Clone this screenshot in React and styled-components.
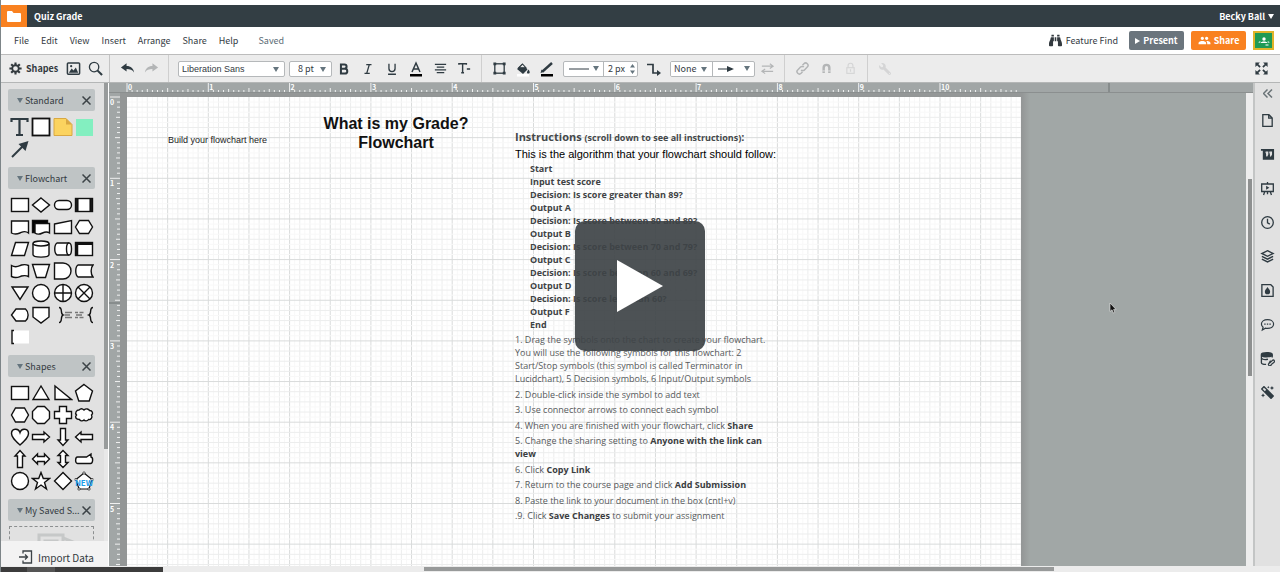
import React from "react";
import styled, { createGlobalStyle } from "styled-components";
import { FaBinoculars, FaMagic, FaWrench } from "react-icons/fa";
import { MdPeople } from "react-icons/md";

const INCH = 81.3;
const INK = "#2f3b42";

const GlobalStyle = createGlobalStyle`
  * {
    box-sizing: border-box;
  }
  body {
    margin: 0;
    overflow: hidden;
    font-family: "Noto Sans CJK SC", "Noto Sans", sans-serif;
    font-size: 9px;
    color: #333a3f;
  }
  button, select, input {
    font: inherit;
    color: inherit;
  }
  h1, h2, p, ul, ol {
    margin: 0;
    padding: 0;
    list-style: none;
  }
`;

const Shell = styled.div`
  display: flex;
  flex-direction: column;
  height: 100vh;
  border-left: 1px solid #7d8588;
  padding-top: 5px;
  background: #fff;
`;

const TitleBar = styled.header`
  display: flex;
  align-items: center;
  height: 22px;
  flex: none;
  padding-right: 6px;
  background: #333e44;
  color: #fff;
`;

const HomeLink = styled.a`
  display: flex;
  align-items: center;
  justify-content: center;
  width: 26px;
  height: 22px;
  background: #f98120;
  color: #fff;
`;

const DocTitle = styled.h1`
  flex: 1;
  padding-left: 7px;
  font-size: 9px;
  font-weight: 700;
`;

const UserButton = styled.button`
  display: flex;
  align-items: center;
  gap: 3px;
  padding: 0;
  border: 0;
  background: none;
  font-weight: 700;
`;

const MenuBar = styled.nav`
  display: flex;
  align-items: center;
  height: 28px;
  flex: none;
  padding: 0 6px 0 13px;
  border-bottom: 1px solid #bcbcbc;
`;

const MenuButton = styled.button`
  padding: 0;
  margin-right: 12px;
  border: 0;
  background: none;
`;

const SaveState = styled.span`
  margin-left: 8px;
  color: #5b6b75;
`;

const MenuActions = styled.div`
  display: flex;
  align-items: center;
  gap: 7px;
  margin-left: auto;
`;

const FeatureFind = styled.button`
  display: flex;
  align-items: center;
  gap: 4px;
  padding: 0;
  margin-right: 4px;
  border: 0;
  background: none;
`;

const ActionButton = styled.button`
  display: flex;
  align-items: center;
  justify-content: center;
  gap: 3px;
  width: 55px;
  height: 19px;
  padding: 0;
  border: 0;
  border-radius: 2px;
  background: ${(p) => p.$color};
  color: #fff;
  font-weight: 700;
`;

const ClassroomButton = styled.button`
  display: flex;
  align-items: center;
  justify-content: center;
  width: 21px;
  height: 19px;
  padding: 0;
  border: 2px solid #dfb32a;
  background: #1f9a55;
`;

const ToolBar = styled.div`
  display: flex;
  align-items: center;
  height: 28px;
  flex: none;
  background: #ececec;
  border-bottom: 1px solid #b4b6b6;
`;

const ToolLead = styled.div`
  display: flex;
  align-items: center;
  gap: 6px;
  width: 109px;
  height: 27px;
  padding: 0 6px 0 8px;
  border-right: 1px solid #c4c4c4;
`;

const ShapesButton = styled.button`
  display: flex;
  align-items: center;
  flex: 1;
  gap: 4px;
  padding: 0;
  border: 0;
  background: none;
  font-weight: 700;
`;

const ToolGroup = styled.div`
  display: flex;
  align-items: center;
  height: 27px;
  padding: 0 5px;
  border-right: ${(p) => (p.$last ? "0" : "1px solid #cfcfcf")};
`;

const FieldRow = styled.div`
  display: flex;
  align-items: center;
  gap: 4px;
  padding-left: 4px;
`;

const IconButton = styled.button`
  display: flex;
  align-items: center;
  justify-content: center;
  width: ${(p) => p.$w || 24}px;
  height: 22px;
  padding: 0;
  border: 0;
  background: none;
  color: ${(p) => (p.$off ? "#b3b5b6" : INK)};
  opacity: ${(p) => (p.$faint ? 0.4 : 1)};
`;

const FullScreen = styled(IconButton)`
  margin: 0 7px 0 auto;
`;

const Field = styled.div`
  position: relative;
  width: ${(p) => p.$w}px;
  height: 16px;
  background: #fff;
  border: ${(p) => (p.$joined ? "0" : "1px solid #b5b8ba")};
  border-right: ${(p) => (p.$joined ? "1px solid #b5b8ba" : "")};
  border-radius: ${(p) => (p.$joined ? 0 : 2)}px;
`;

const Select = styled.select`
  appearance: none;
  display: block;
  width: 100%;
  height: 14px;
  padding: 0 0 0 ${(p) => p.$pad || 3}px;
  border: 0;
  background: transparent;
  font-family: ${(p) => (p.$sans ? '"Liberation Sans", sans-serif' : "inherit")};
  line-height: 14px;
`;

const FieldCaret = styled.span`
  position: absolute;
  right: 5px;
  top: 5px;
  pointer-events: none;
`;

const JoinedFields = styled.div`
  display: flex;
  height: 16px;
  border: 1px solid #b5b8ba;
  border-radius: 2px;
  background: #fff;
  overflow: hidden;
`;

const MenuField = styled.button`
  display: flex;
  align-items: center;
  justify-content: space-between;
  width: ${(p) => p.$w}px;
  padding: 0 4px 0 5px;
  border: 0;
  border-right: ${(p) => (p.$line ? "1px solid #b5b8ba" : "0")};
  background: none;
`;

const WidthInput = styled.input`
  width: 25px;
  padding: 0 0 0 4px;
  border: 0;
  background: none;
`;

const Caret = styled.span`
  display: block;
  width: 0;
  height: 0;
  border-left: 3px solid transparent;
  border-right: 3px solid transparent;
  border-top: 5px solid ${(p) => p.$color || "#65757e"};
`;

const Workspace = styled.div`
  display: flex;
  flex: 1;
  min-height: 0;
`;

const SidePanel = styled.aside`
  display: flex;
  flex-direction: column;
  width: 108px;
  flex: none;
  background: #e1e1e1;
  border-right: 1px solid #fff;
`;

const ShapeScroller = styled.div`
  display: flex;
  flex: 1;
  min-height: 0;
  overflow: hidden;
`;

const ShapeSections = styled.div`
  flex: 1;
  min-width: 0;
  padding: 6px 9px 0 7px;
`;

const PanelScrollbar = styled.div`
  width: 4px;
  background: #e8e8e8;
`;

const PanelThumb = styled.div`
  height: 80%;
  background: #989b9b;
`;

const SectionHeader = styled.h2`
  display: flex;
  align-items: center;
  height: 22px;
  gap: 2px;
  padding: 0 4px 0 9px;
  background: #bfc4c5;
  border-radius: 2px;
  font-size: 9px;
  font-weight: 400;
  white-space: nowrap;
`;

const SectionName = styled.span`
  flex: 1;
`;

const CloseButton = styled.button`
  display: flex;
  padding: 0;
  border: 0;
  background: none;
`;

const ShapeGrid = styled.div`
  display: grid;
  grid-template-columns: repeat(4, 1fr);
  grid-auto-rows: 22px;
  padding: 5px 0 7px 1px;
`;

const ShapeButton = styled.button`
  display: flex;
  align-items: center;
  justify-content: center;
  padding: 0;
  border: 0;
  background: none;
`;

const SavedDrop = styled.div`
  display: flex;
  justify-content: center;
  height: 60px;
  margin: 5px 1px;
  padding-top: 5px;
  border: 1px dashed #8c8f90;
`;

const ImportButton = styled.button`
  display: flex;
  align-items: center;
  gap: 5px;
  height: 25px;
  padding: 7px 0 0 18px;
  border: 0;
  background: #f3f3f3;
  font-size: 10px;
`;

const Stage = styled.main`
  display: grid;
  grid-template-columns: 11px 1fr;
  grid-template-rows: 10px 1fr;
  flex: 1;
  min-width: 0;
  background: #a1a6a6;
`;

const TopRuler = styled.div`
  grid-column: 1 / 3;
  height: 10px;
  overflow: hidden;
  border-bottom: 1px solid #8b8f8f;
`;

const SideRuler = styled.div`
  overflow: hidden;
  min-height: 0;
`;

const View = styled.div`
  display: flex;
  min-height: 0;
  min-width: 0;
`;

const Desk = styled.div`
  flex: 1;
  min-width: 0;
  overflow: hidden;
  padding: 4px 0 0 7px;
  background: linear-gradient(90deg, #949797 902px, #a1a7a6 910px);
`;

const Page = styled.div`
  position: relative;
  width: 894px;
  height: 100%;
  background: #fff;
`;

const GridSvg = styled.svg`
  display: block;
  width: 100%;
  height: 100%;
`;

// text boxes sit freely on the page
const CanvasText = styled.div`
  position: absolute;
  left: ${(p) => p.$x}px;
  top: ${(p) => p.$y}px;
  width: ${(p) => p.$w}px;
`;

const BuildText = styled(CanvasText)`
  font: 9px/12px "Liberation Sans", sans-serif;
  color: #222;
`;

const PageTitle = styled(CanvasText)`
  font: bold 16px/19px "Liberation Sans", sans-serif;
  text-align: center;
  color: #111;
`;

const Instructions = styled(CanvasText)`
  font-family: "Open Sans", sans-serif;
  font-size: 9px;
  line-height: 13px;
  color: #56595b;
  strong {
    color: #3a3d3f;
  }
`;

const InstructionsTitle = styled.h2`
  font-size: 11px;
  line-height: 16px;
  color: #44484a;
  small {
    font-size: 9px;
  }
`;

const Intro = styled.p`
  padding-top: 1px;
  font: 11px/15px "Liberation Sans", sans-serif;
  color: #000;
`;

const Algorithm = styled.ul`
  padding-left: 15px;
  font-weight: 700;
  color: #3f4345;
`;

const Steps = styled.ul`
  display: flex;
  flex-direction: column;
  justify-content: space-between;
  height: 189px;
  margin-top: 2px;
`;

const VScroll = styled.div`
  width: 7px;
  padding: 86px 1px 0 2px;
  background: #ededed;
`;

const VThumb = styled.div`
  height: 51%;
  background: #8e9090;
`;

const Dock = styled.aside`
  display: flex;
  flex-direction: column;
  align-items: center;
  width: 27px;
  flex: none;
  background: #e1e1e1;
  border-left: 2px solid #c3c5c5;
`;

const DockButton = styled.button`
  display: flex;
  align-items: center;
  justify-content: center;
  width: 25px;
  height: ${(p) => p.$h || 34}px;
  flex: none;
  padding: 0;
  border: 0;
  background: none;
  color: ${INK};
`;

const BottomBar = styled.footer`
  display: flex;
  height: 6px;
  flex: none;
  padding: 1px 27px 0 0;
  background: #ececec;
`;

const BottomDark = styled.div`
  width: 162px;
  background: linear-gradient(90deg, #3c3c3c 26px, #555 26px, #555 54px, #3c3c3c 54px);
`;

const BottomTrack = styled.div`
  flex: 1;
  padding-left: 261px;
`;

const BottomThumb = styled.div`
  width: 76%;
  height: 4px;
  background: #989a9a;
`;

const PlayButton = styled.button`
  position: fixed;
  inset: 0;
  margin: auto;
  display: flex;
  align-items: center;
  justify-content: center;
  width: 130px;
  height: 130px;
  padding: 0;
  border: 0;
  border-radius: 10px;
  background: rgba(62, 67, 70, 0.92);
`;

const Pointer = styled.svg`
  position: absolute;
  left: 1109px;
  top: 302px;
`;

function Icon({ size = 16, children, ...rest }) {
  return (
    <svg width={size} height={size} viewBox="0 0 16 16" fill="none" stroke="currentColor" strokeWidth="1.4" aria-hidden="true" {...rest}>
      {children}
    </svg>
  );
}

const solid = { fill: "currentColor", stroke: "none" };

const toolIcons = {
  gear: (
    <>
      <circle cx="8" cy="8" r="4" strokeWidth="2.2" />
      <path d="M8 .5v3.500M8 12v3.500M.5 8h3.500M12 8h3.500M2.700 2.700L5 5M11 11l2.300 2.300M13.300 2.700L11 5M5 11l-2.300 2.300" strokeWidth="2.6" />
    </>
  ),
  image: (
    <>
      <rect x="1.500" y="2" width="13" height="12" rx="1" strokeWidth="1.6" />
      <path d="M3 12.500l3-4.500 2 2 2.500-3 2.500 5.500z" {...solid} />
      <circle cx="5.500" cy="5.500" r="1.200" {...solid} />
    </>
  ),
  search: (
    <>
      <circle cx="6.500" cy="6.500" r="5" />
      <path d="M10 10l5 5" strokeWidth="2.200" />
    </>
  ),
  undo: <path d="M1 6.800L7 2.500v2.800c4.500 0 7.500 2.500 8 7C13.500 9.500 10.500 8.600 7 8.600v2.700z" {...solid} />,
  redo: <path d="M15 6.800L9 2.500v2.800c-4.500 0-7.500 2.500-8 7C2.500 9.500 5.500 8.600 9 8.600v2.700z" {...solid} />,
  bold: <path d="M4.500 2.800h4a2.400 2.400 0 0 1 0 4.900h-4zM4.500 7.700h4.500a2.700 2.700 0 0 1 0 5.500H4.500z" strokeWidth="2.300" />,
  italic: <path d="M6 3h6M4 13h6M9.500 3l-3 10" strokeWidth="1.500" />,
  underline: <path d="M4.500 2v5.500a3.500 3.500 0 0 0 7 0V2M3.500 14h9" strokeWidth="1.500" />,
  color: (
    <>
      <path d="M4 11L8 2l4 9M5.500 8h5" strokeWidth="1.500" />
      <rect x="2" y="13" width="12" height="2.500" fill="#000" stroke="none" />
    </>
  ),
  align: <path d="M2 3.500h12M4 6.500h8M2 9.500h12M4 12.500h8" strokeWidth="1.300" />,
  text: <path d="M2 4V3h8v1M6 3v9.500M4.500 12.500h3M10.500 8.500h3.500" strokeWidth="1.500" />,
  frame: (
    <>
      <rect x="3" y="3" width="10" height="10" />
      <path d="M1.500 1.500h3v3h-3zM11.500 1.500h3v3h-3zM1.500 11.500h3v3h-3zM11.500 11.500h3v3h-3z" {...solid} />
    </>
  ),
  fill: (
    <>
      <rect x="2" y="13" width="12" height="2.500" fill="#fff" stroke="none" />
      <path d="M2 8l5-5 5.500 5.500L8 13z" {...solid} />
      <path d="M4 6.500l3.500-3.500L11 6.800z" fill="#ececec" stroke="currentColor" strokeWidth="1.100" />
      <path d="M13.500 8.500c1.500 2 1.800 4-.2 4s-1.500-2 .2-4z" {...solid} />
    </>
  ),
  pen: (
    <>
      <path d="M3.500 10.500L13 2" strokeWidth="2.400" />
      <path d="M1.500 12l1-3.500 2.500 2.500z" {...solid} />
      <rect x="2" y="13" width="12" height="2.500" fill="#000" stroke="none" />
    </>
  ),
  elbow: (
    <>
      <path d="M1 3.500h6v8.500h5" strokeWidth="1.700" />
      <path d="M11 9l4 3-4 3z" {...solid} />
    </>
  ),
  swap: <path d="M2 5.500h11M10.500 3L14 5.500 10.500 8M14 11H3M5.500 8.500L2 11l3.500 2.500" strokeWidth="1.200" />,
  link: (
    <path
      d="M6.500 9.500a2.500 2.500 0 0 0 3.600 0l3-3a2.500 2.500 0 0 0-3.600-3.600L8 4.500M9.500 6.500a2.500 2.500 0 0 0-3.600 0l-3 3a2.500 2.500 0 0 0 3.600 3.600L8 11.500"
      strokeWidth="1.600"
    />
  ),
  magnet: (
    <>
      <path d="M4.500 13.500V7a3.500 3.500 0 0 1 7 0v6.500" strokeWidth="3" />
      <path d="M3 11h3M10 11h3" stroke="#ececec" strokeWidth="1" />
    </>
  ),
  lock: (
    <>
      <rect x="3.500" y="7" width="9" height="7" />
      <path d="M5 7V4.500a3 3 0 0 1 6 0V7M8 9v3" />
    </>
  ),
  expand: (
    <>
      <path d="M3 3l3.500 3.500M13 3L9.500 6.500M3 13l3.500-3.500M13 13L9.500 9.500" strokeWidth="1.800" />
      <path d="M1.500 1.500h4.800L1.500 6.300zM14.500 1.500v4.800L9.700 1.500zM1.500 14.500V9.700l4.800 4.800zM14.500 14.500H9.700l4.800-4.800z" {...solid} />
    </>
  ),
};

const dockIcons = [
  ["Pages", <path d="M3 1.800h6.500L13 5.300v9H3zM9.300 2v3.500H13" />],
  [
    "Notes",
    <>
      <path d="M1 2h14v11.500H3V4H1z" {...solid} />
      <path d="M6 5.500h2.200v2.300L7 10M10 5.500h2.200v2.300L11 10" stroke="#e1e1e1" strokeWidth="1.300" fill="#e1e1e1" />
    </>,
  ],
  [
    "Presentation",
    <>
      <path d="M1.800 3.200h12.400v8H1.800zM8 1v2M5 11.500L3.800 15M11 11.500l1.200 3.500M8 11.500V14" />
      <path d="M6.500 5l3.500 2.200-3.500 2.200z" {...solid} />
    </>,
  ],
  [
    "History",
    <>
      <circle cx="8" cy="8" r="6.200" />
      <path d="M8 4v4.300l2.500 1.500" />
    </>,
  ],
  ["Layers", <path d="M8 1.800l6 3-6 3-6-3zM2 7.800l6 3 6-3M2 10.800l6 3 6-3" strokeWidth="1.500" />],
  [
    "Theme",
    <>
      <path d="M2 1.800h9.500L14 4.300v10H2z" />
      <path d="M8 4.300c2 2.700 2.800 3.700 2.800 5a2.800 2.800 0 0 1-5.600 0c0-1.300.8-2.300 2.800-5z" {...solid} />
    </>,
  ],
  [
    "Comments",
    <>
      <path d="M8 2.800c3.800 0 6.500 2 6.500 4.700s-2.700 4.700-6.500 4.700c-.8 0-1.500 0-2.200-.3L2.500 13.800l.8-3C2.200 10 1.500 8.800 1.500 7.500c0-2.700 2.700-4.700 6.500-4.700z" strokeWidth="1.300" />
      <path d="M4.500 7h1.500v1.300H4.500zM7.300 7h1.500v1.300H7.300zM10 7h1.500v1.300H10z" {...solid} />
    </>,
  ],
  [
    "Data",
    <>
      <path d="M1.500 3.500v9c0 1 2 1.800 5 1.800M13 3.500v3.500M1.500 7.500c1 1.500 4.500 1.800 7 1.300" />
      <path d="M1 3c0-1.200 2.700-2 6.200-2s6.300.8 6.300 2v2.500c-1.500 1-3.500 1.300-6.300 1.300S2 6.500 1 5.500z" {...solid} />
      <path d="M10.500 12.500l3.500-3a1.500 1.500 0 0 1 1 2.500l-3 2.500a1.500 1.500 0 0 1-3-.500l1.500-2.500z" strokeWidth="1.300" />
    </>,
  ],
];

const ellipse = <circle cx="10" cy="10" r="8.500" />;
const box = <rect x="1.500" y="3.500" width="17" height="13" />;

const standardShapes = [
  ["Text", <path d="M1.500 5V2h16v3M9.500 2v16M6 18h7" fill="none" stroke={INK} strokeWidth="2.200" />],
  ["Block", <rect x="1.500" y="1.500" width="17" height="17" strokeWidth="1.800" />],
  [
    "Note",
    <>
      <path d="M1 1.500h12l6 6v11H1z" fill="#fbd35f" stroke="#d9a842" strokeWidth="1" />
      <path d="M13 1.500l6 6h-6z" fill="#d9a842" stroke="none" />
    </>,
  ],
  ["Hotspot", <rect x="2" y="2" width="17" height="17" fill="#83efc0" stroke="none" />],
  [
    "Line",
    <>
      <path d="M2 18L13 7" stroke={INK} strokeWidth="2" />
      <path d="M18.500 2l-3 10L8.500 5z" fill={INK} stroke="none" />
    </>,
  ],
];

const flowShapes = [
  ["Process", box],
  ["Decision", <path d="M10 3l8.500 7-8.500 7-8.500-7z" />],
  ["Terminator", <rect x="1.500" y="5.500" width="17" height="9" rx="4.500" />],
  [
    "Predefined process",
    <>
      {box}
      <path d="M3.300 3.500v13M16.700 3.500v13" strokeWidth="2.500" />
    </>,
  ],
  ["Document", <path d="M1.500 4h17v12c-4-3-6-1-8.500 0s-5 2-8.500 0z" />],
  [
    "Multiple documents",
    <>
      <path d="M1.500 3.500h15v3h-12v9h-3z" fill="#000" />
      <path d="M4 6.500h14.500v9.500c-3-2-5-1-7 0s-5 2-7.500 0z" />
    </>,
  ],
  ["Manual input", <path d="M1.500 7l17-3.500v13h-17z" />],
  ["Preparation", <path d="M5.500 3.500h9l4 6.500-4 6.500h-9L1.500 10z" />],
  ["Data", <path d="M5.500 3.500h13l-4 13h-13z" />],
  [
    "Database",
    <>
      <path d="M2 4.500v11c0 3.500 16 3.500 16 0v-11" />
      <ellipse cx="10" cy="4.500" rx="8" ry="2.500" />
    </>,
  ],
  [
    "Direct data",
    <>
      <path d="M4 4h11.500v12H4C1 14 1 6 4 4z" />
      <ellipse cx="16" cy="10" rx="2.500" ry="6" />
    </>,
  ],
  [
    "Internal storage",
    <>
      {box}
      <path d="M3 4v12M2 4.800h16" strokeWidth="2.500" />
    </>,
  ],
  ["Paper tape", <path d="M1.500 4.500c5 3 8 0 10-.5s5-.5 7 .5v11c-2-1-5-1-7-.5s-5 3-10 .500z" />],
  ["Manual operation", <path d="M1.500 3.500h17l-4 13h-9z" />],
  ["Delay", <path d="M1.500 2h8.500a8 8 0 0 1 0 16H1.500z" />],
  ["Stored data", <path d="M4 4h15c-2.500 3-2.500 9 0 12H4C1 14 1 6 4 4z" />],
  ["Merge", <path d="M2 4h16l-8 12.500z" />],
  ["Connector", ellipse],
  [
    "Or",
    <>
      {ellipse}
      <path d="M10 1.500v17M1.500 10h17" />
    </>,
  ],
  [
    "Summing junction",
    <>
      {ellipse}
      <path d="M4 4l12 12M16 4L4 16" />
    </>,
  ],
  ["Display", <path d="M6 4h9.500c3.500 3 3.500 9 0 12H6l-4.500-6z" />],
  ["Off-page link", <path d="M2 2.500h16v9.500l-8 6-8-6z" />],
  [
    "Brace note",
    <>
      <path d="M6 2.500c4 0 1 6.500 4 7.500-3 1 0 7.500-4 7.500" fill="none" />
      <path d="M12 7.500h7M12 10h5M12 12.500h7" stroke="#777" />
    </>,
  ],
  [
    "Brace note left",
    <>
      <path d="M19 2.500c-4 0-1 6.500-4 7.500 3 1 0 7.500 4 7.500" fill="none" />
      <path d="M1 7.500h3M5.500 7.500h4M2 10h6M1 12.500h3M5.500 12.500h4" stroke="#777" />
    </>,
  ],
  [
    "Note",
    <>
      <rect x="2" y="3.500" width="17" height="13" stroke="none" />
      <path d="M4 3.500H2v13h2" fill="none" />
    </>,
  ],
];

const basicShapes = [
  ["Rectangle", box],
  ["Triangle", <path d="M10 3l8 13.500H2z" />],
  ["Right triangle", <path d="M2 3l16.500 13.500H2z" />],
  ["Pentagon", <path d="M10 1.500l8.500 6.500-3.300 10H4.800L1.500 8z" />],
  ["Hexagon", <path d="M5.500 3h9l4 7-4 7h-9l-4-7z" />],
  ["Octagon", <path d="M6.500 1.500h7l5 5v7l-5 5h-7l-5-5v-7z" />],
  ["Cross", <path d="M6.500 1.500h7v5h5v7h-5v5h-7v-5h-5v-7h5z" />],
  [
    "Cloud",
    <path d="M5 5c2-2 4-1 5 0 2-2 5-1 5.500.500 3 0 4 3 2 4.500 1.500 3-1 5-3 4.500-1 2-4 1.500-4.500.500-1.500 1.500-4 1-4.500-.500-3.500 0-5-2.500-3-4.500-2-2 0-5 2.500-5z" />,
  ],
  ["Heart", <path d="M10 18C5 13.500 1.500 10.500 1.500 6.500c0-5 7-6 8.500-1 1.500-5 8.500-4 8.500 1 0 4-3.500 7-8.500 11.500z" />],
  ["Arrow right", <path d="M1.500 7.500h11.500V5l5.500 5-5.500 5v-2.500H1.500z" />],
  ["Arrow down", <path d="M7.500 1.500v11.500H5l5 5.500 5-5.500h-2.500V1.500z" />],
  ["Arrow left", <path d="M18.500 7.500H7V5l-5.500 5L7 15v-2.500h11.500z" />],
  ["Arrow up", <path d="M7.500 18.500V7H5l5-5.500L15 7h-2.500v11.500z" />],
  ["Double arrow", <path d="M1.500 10L6.500 5v2.500h7V5l5 5-5 5v-2.500h-7V15z" />],
  ["Double arrow vertical", <path d="M10 1.500L5 6.500h2.500v7H5l5 5 5-5h-2.500v-7H15z" />],
  ["Callout", <path d="M3.500 8h9l4.500-3v3c2.500.500 2 6.500-.500 6.500h-13c-2.500 0-2.500-6.500 0-6.500z" />],
  ["Circle", ellipse],
  ["Star", <path d="M10 1.500l2.300 6h6.200l-5 4 2 6.500L10 14l-5.500 4 2-6.500-5-4h6.200z" />],
  ["Diamond", <path d="M10 1.500l8.500 8.500-8.500 8.500L1.500 10z" />],
  [
    "Polygon",
    <>
      <path d="M10 2l8 6.500-3 9.500H5L2 8.500z" strokeWidth="1.200" />
      <path d="M9 1h2v2H9zM1 7.500h2v2H1zM17 7.500h2v2h-2zM4 17h2v2H4zM14 17h2v2h-2z" strokeWidth=".6" />
      <text x="10" y="14.500" textAnchor="middle" fontSize="8" fontWeight="700" fill="#1e9ce8" stroke="none">
        NEW
      </text>
    </>,
  ],
];

function PanelHeader({ title }) {
  return (
    <SectionHeader>
      <Caret />
      <SectionName>{title}</SectionName>
      <CloseButton aria-label={`Close ${title}`}>
        <svg width="9" height="9" viewBox="0 0 9 9" stroke="#3c4347" strokeWidth="1.5">
          <path d="M.5.5l8 8M8.500.5l-8 8" />
        </svg>
      </CloseButton>
    </SectionHeader>
  );
}

function ShapeSet({ title, shapes }) {
  return (
    <section>
      <PanelHeader title={title} />
      <ShapeGrid>
        {shapes.map(([name, art]) => (
          <ShapeButton key={name} aria-label={name}>
            <svg width="20" height="20" viewBox="0 0 20 20" fill="#fff" stroke="#111" strokeWidth="1.4">
              {art}
            </svg>
          </ShapeButton>
        ))}
      </ShapeGrid>
    </section>
  );
}

function Tool({ name, icon, off, faint, size }) {
  return (
    <IconButton aria-label={name} $off={off} $faint={faint}>
      <Icon size={size}>{toolIcons[icon]}</Icon>
    </IconButton>
  );
}

function tickLength(i) {
  if (i % 16 === 0) return 10;
  if (i % 8 === 0) return 5;
  return i % 4 === 0 ? 4 : 3;
}

function Ruler({ vertical, inches, origin, marker }) {
  const ticks = Array.from({ length: inches * 16 }, (_, i) => i);
  return (
    <svg width={vertical ? 11 : "100%"} height={vertical ? "100%" : 10} stroke="#fff" display="block">
      {ticks.map((i) => {
        const at = origin + (i * INCH) / 16;
        const len = tickLength(i);
        return <path key={i} d={vertical ? `M${11 - len} ${at}h${len}` : `M${at} ${10 - len}v${len}`} opacity=".85" />;
      })}
      {ticks
        .filter((i) => i % 16 === 0)
        .map((i) => {
          const at = origin + (i * INCH) / 16;
          return (
            <text key={i} x={vertical ? 1 : at + 1} y={vertical ? at + 8 : 7} fill="#fff" stroke="none" fontSize="7" fontWeight="700">
              {i / 16}
            </text>
          );
        })}
      <path d={vertical ? `M0 ${marker}h11` : `M${marker} 0v10`} stroke="#6d7273" />
    </svg>
  );
}

function PageGrid() {
  const step = INCH / 16;
  const lines = Array.from({ length: 176 }, (_, i) => i + 1);
  const tone = (i) => (i % 8 === 0 ? "#d9dbdb" : i % 2 === 0 ? "#eceded" : "#f8f8f8");
  return (
    <GridSvg aria-hidden="true">
      {lines.map((i) => (
        <path key={`v${i}`} d={`M${i * step} 0V2000`} stroke={tone(i)} />
      ))}
      {lines.map((i) => (
        <path key={`h${i}`} d={`M0 ${i * step}H894`} stroke={tone(i)} />
      ))}
    </GridSvg>
  );
}

const algorithm = [
  "Start",
  "Input test score",
  "Decision: Is score greater than 89?",
  "Output A",
  "Decision: Is score between 80 and 89?",
  "Output B",
  "Decision: Is score between 70 and 79?",
  "Output C",
  "Decision: Is score between 60 and 69?",
  "Output D",
  "Decision: Is score less than 60?",
  "Output F",
  "End",
];

export default function App() {
  return (
    <Shell>
      <GlobalStyle />
      <TitleBar>
        <HomeLink href="#" aria-label="Documents">
          <svg width="14" height="11" viewBox="0 0 14 11" fill="#fff">
            <path d="M0 1q0-1 1-1h4l1.500 2H13q1 0 1 1v7q0 1-1 1H1q-1 0-1-1z" />
          </svg>
        </HomeLink>
        <DocTitle>Quiz Grade</DocTitle>
        <UserButton>
          Becky Ball
          <Caret $color="#fff" />
        </UserButton>
      </TitleBar>

      <MenuBar>
        {["File", "Edit", "View", "Insert", "Arrange", "Share", "Help"].map((item) => (
          <MenuButton key={item}>{item}</MenuButton>
        ))}
        <SaveState>Saved</SaveState>
        <MenuActions>
          <FeatureFind>
            <FaBinoculars size={13} />
            Feature Find
          </FeatureFind>
          <ActionButton $color="#6b757d">
            <svg width="5" height="6" viewBox="0 0 5 6" fill="#fff">
              <path d="M0 0l5 3-5 3z" />
            </svg>
            Present
          </ActionButton>
          <ActionButton $color="#f98120">
            <MdPeople size={13} />
            Share
          </ActionButton>
          <ClassroomButton aria-label="Google Classroom">
            <svg width="14" height="10" viewBox="0 0 14 10" fill="#fff">
              <circle cx="7" cy="3" r="1.700" />
              <path d="M3.500 7c.5-2 6.500-2 7 0zM8.500 8.500h3v1h-3z" />
              <path d="M1.500 7c0-1.500 1-2 2-2L3 7zM12.500 7c0-1.500-1-2-2-2l.5 2z" opacity=".6" />
            </svg>
          </ClassroomButton>
        </MenuActions>
      </MenuBar>

      <ToolBar>
        <ToolLead>
          <ShapesButton>
            <Icon size={13}>{toolIcons.gear}</Icon>
            Shapes
          </ShapesButton>
          <IconButton $w={16} aria-label="Images">
            <Icon size={15}>{toolIcons.image}</Icon>
          </IconButton>
          <IconButton $w={16} aria-label="Search">
            <Icon size={15}>{toolIcons.search}</Icon>
          </IconButton>
        </ToolLead>
        <ToolGroup>
          <Tool name="Undo" icon="undo" size={15} />
          <Tool name="Redo" icon="redo" size={15} off />
        </ToolGroup>
        <ToolGroup>
          <FieldRow>
            <Field $w={107}>
              <Select $sans aria-label="Font">
                <option>Liberation Sans</option>
              </Select>
              <FieldCaret>
                <Caret />
              </FieldCaret>
            </Field>
            <Field $w={43}>
              <Select $pad={8} aria-label="Font size">
                <option>8 pt</option>
              </Select>
              <FieldCaret>
                <Caret />
              </FieldCaret>
            </Field>
          </FieldRow>
          <Tool name="Bold" icon="bold" size={14} />
          <Tool name="Italic" icon="italic" size={14} />
          <Tool name="Underline" icon="underline" size={14} />
          <Tool name="Text color" icon="color" />
          <Tool name="Align" icon="align" size={15} />
          <Tool name="Text options" icon="text" size={15} />
        </ToolGroup>
        <ToolGroup>
          <Tool name="Frame" icon="frame" size={15} />
          <Tool name="Fill" icon="fill" />
          <Tool name="Line color" icon="pen" />
          <FieldRow>
            <JoinedFields>
              <MenuField $w={40} $line aria-label="Line style">
                <svg width="20" height="2">
                  <path d="M0 1h20" stroke={INK} />
                </svg>
                <Caret />
              </MenuField>
              <WidthInput defaultValue="2 px" aria-label="Line width" />
              <svg width="8" height="14" viewBox="0 0 8 14" fill="#65757e">
                <path d="M1 5.500L3.500 2 6 5.500zM1 8.500L3.500 12 6 8.500z" />
              </svg>
            </JoinedFields>
            <Tool name="Connector" icon="elbow" />
            <JoinedFields>
              <Field $w={42} $joined>
                <Select aria-label="Line start">
                  <option>None</option>
                </Select>
                <FieldCaret>
                  <Caret />
                </FieldCaret>
              </Field>
              <MenuField $w={41} aria-label="Line end">
                <svg width="17" height="8" fill={INK}>
                  <path d="M0 3.500h9V1l7 3-7 3V4.500H0z" />
                </svg>
                <Caret />
              </MenuField>
            </JoinedFields>
          </FieldRow>
          <Tool name="Swap ends" icon="swap" size={15} off />
        </ToolGroup>
        <ToolGroup>
          <Tool name="Link" icon="link" size={15} off />
          <Tool name="Magnet" icon="magnet" size={13} off />
          <Tool name="Lock" icon="lock" size={13} off faint />
        </ToolGroup>
        <ToolGroup $last>
          <IconButton aria-label="Settings" $off $faint>
            <FaWrench size={12} transform="scale(-1 1)" />
          </IconButton>
        </ToolGroup>
        <FullScreen aria-label="Full screen">
          <Icon size={15}>{toolIcons.expand}</Icon>
        </FullScreen>
      </ToolBar>

      <Workspace>
        <SidePanel>
          <ShapeScroller>
            <ShapeSections>
              <ShapeSet title="Standard" shapes={standardShapes} />
              <ShapeSet title="Flowchart" shapes={flowShapes} />
              <ShapeSet title="Shapes" shapes={basicShapes} />
              <PanelHeader title="My Saved S..." />
              <SavedDrop>
                <svg width="66" height="30" viewBox="0 0 66 30" fill="none" stroke="#c6c8c8" strokeWidth="3">
                  <rect x="20" y="3" width="24" height="24" />
                  <path d="M26 9h12v14H26zM44 6l20 8M20 10L2 15M32 9v14" />
                </svg>
              </SavedDrop>
            </ShapeSections>
            <PanelScrollbar>
              <PanelThumb />
            </PanelScrollbar>
          </ShapeScroller>
          <ImportButton>
            <svg width="14" height="14" viewBox="0 0 14 14" fill="none" stroke="#3c4347" strokeWidth="1.300">
              <path d="M4 3.500V1h8.500v12H4v-2.500M0 7h8.500M6 4.500L8.500 7 6 9.500" />
            </svg>
            Import Data
          </ImportButton>
        </SidePanel>

        <Stage>
          <TopRuler>
            <Ruler inches={11} origin={18} marker={1000} />
          </TopRuler>
          <SideRuler>
            <Ruler vertical inches={6} origin={4} marker={210} />
          </SideRuler>
          <View>
            <Desk>
              <Page>
                <PageGrid />
                <BuildText $x={41} $y={37} $w={140}>
                  Build your flowchart here
                </BuildText>
                <PageTitle $x={169} $y={17} $w={200}>
                  What is my Grade?
                  <br />
                  Flowchart
                </PageTitle>
                <Instructions $x={388} $y={32} $w={264}>
                  <InstructionsTitle>
                    Instructions <small>(scroll down to see all instructions)</small>:
                  </InstructionsTitle>
                  <Intro>This is the algorithm that your flowchart should follow:</Intro>
                  <Algorithm>
                    {algorithm.map((line) => (
                      <li key={line}>{line}</li>
                    ))}
                  </Algorithm>
                  <Steps>
                    <li>
                      1. Drag the symbols onto the chart to create your flowchart. You will use the following symbols for this flowchart: 2
                      Start/Stop symbols (this symbol is called Terminator in Lucidchart), 5 Decision symbols, 6 Input/Output symbols
                    </li>
                    <li>2. Double-click inside the symbol to add text</li>
                    <li>3. Use connector arrows to connect each symbol</li>
                    <li>
                      4. When you are finished with your flowchart, click <strong>Share</strong>
                    </li>
                    <li>
                      5. Change the sharing setting to <strong>Anyone with the link can view</strong>
                    </li>
                    <li>
                      6. Click <strong>Copy Link</strong>
                    </li>
                    <li>
                      7. Return to the course page and click <strong>Add Submission</strong>
                    </li>
                    <li>8. Paste the link to your document in the box (cntl+v)</li>
                    <li>
                      .9. Click <strong>Save Changes</strong> to submit your assignment
                    </li>
                  </Steps>
                </Instructions>
              </Page>
            </Desk>
            <VScroll>
              <VThumb />
            </VScroll>
          </View>
        </Stage>

        <Dock>
          <DockButton $h={20} aria-label="Collapse">
            <svg width="10" height="9" viewBox="0 0 10 9" fill="none" stroke="#6a7377" strokeWidth="1.500">
              <path d="M4.500.5l-4 4 4 4M9 .5l-4 4 4 4" />
            </svg>
          </DockButton>
          {dockIcons.map(([name, art]) => (
            <DockButton key={name} aria-label={name}>
              <Icon size={15}>{art}</Icon>
            </DockButton>
          ))}
          <DockButton aria-label="Magic">
            <FaMagic size={13} transform="scale(-1 1)" />
          </DockButton>
        </Dock>
      </Workspace>

      <BottomBar>
        <BottomDark />
        <BottomTrack>
          <BottomThumb />
        </BottomTrack>
      </BottomBar>

      <PlayButton aria-label="Play video">
        <svg width="46" height="52" viewBox="0 0 46 52" fill="#fff">
          <path d="M0 0l46 26L0 52z" />
        </svg>
      </PlayButton>
      <Pointer width="8" height="12" viewBox="0 0 8 12">
        <path d="M1 1v8.500l2-1.700L4.500 11l1.300-.6L4.600 7.400H7z" fill="#111" stroke="#eee" strokeWidth=".6" />
      </Pointer>
    </Shell>
  );
}
